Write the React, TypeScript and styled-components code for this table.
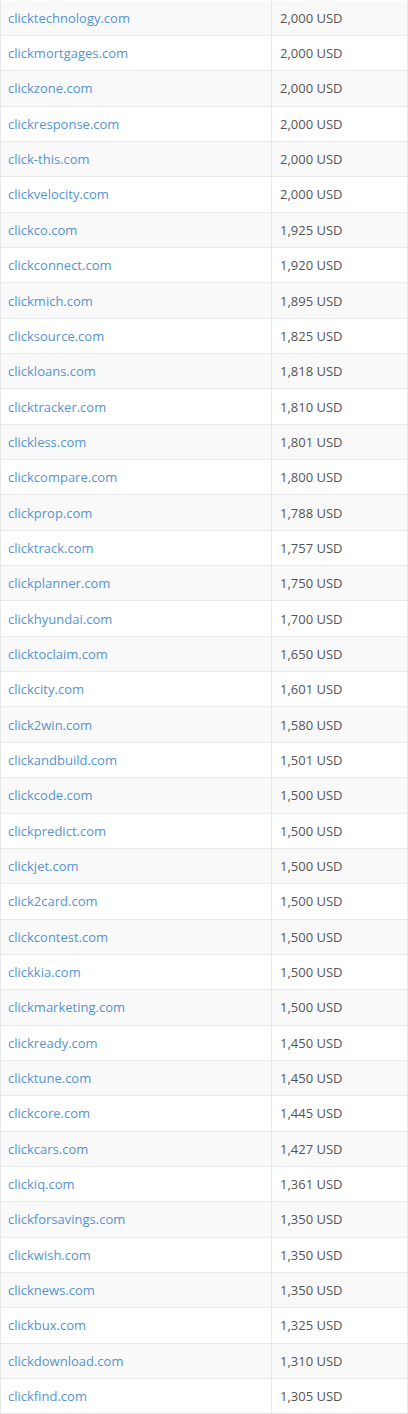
import React from "react";
import styled, { createGlobalStyle } from "styled-components";

const Global = createGlobalStyle`
  html, body { margin: 0; padding: 0; background: #fff; }
  body { font-family: "Open Sans", "Liberation Sans", sans-serif; }
`;

const rows: [string, string][] = [
  ["clicktechnology.com", "2,000"],
  ["clickmortgages.com", "2,000"],
  ["clickzone.com", "2,000"],
  ["clickresponse.com", "2,000"],
  ["click-this.com", "2,000"],
  ["clickvelocity.com", "2,000"],
  ["clickco.com", "1,925"],
  ["clickconnect.com", "1,920"],
  ["clickmich.com", "1,895"],
  ["clicksource.com", "1,825"],
  ["clickloans.com", "1,818"],
  ["clicktracker.com", "1,810"],
  ["clickless.com", "1,801"],
  ["clickcompare.com", "1,800"],
  ["clickprop.com", "1,788"],
  ["clicktrack.com", "1,757"],
  ["clickplanner.com", "1,750"],
  ["clickhyundai.com", "1,700"],
  ["clicktoclaim.com", "1,650"],
  ["clickcity.com", "1,601"],
  ["click2win.com", "1,580"],
  ["clickandbuild.com", "1,501"],
  ["clickcode.com", "1,500"],
  ["clickpredict.com", "1,500"],
  ["clickjet.com", "1,500"],
  ["click2card.com", "1,500"],
  ["clickcontest.com", "1,500"],
  ["clickkia.com", "1,500"],
  ["clickmarketing.com", "1,500"],
  ["clickready.com", "1,450"],
  ["clicktune.com", "1,450"],
  ["clickcore.com", "1,445"],
  ["clickcars.com", "1,427"],
  ["clickiq.com", "1,361"],
  ["clickforsavings.com", "1,350"],
  ["clickwish.com", "1,350"],
  ["clicknews.com", "1,350"],
  ["clickbux.com", "1,325"],
  ["clickdownload.com", "1,310"],
  ["clickfind.com", "1,305"],
];

const Table = styled.div`
  width: 408px;
  box-sizing: border-box;
  padding-top: 0.6px;
  border-left: 1px solid #e8e8e8;
  border-right: 1px solid #e8e8e8;
  display: flex;
  flex-direction: column;
`;

const Row = styled.div<{ $striped: boolean }>`
  display: grid;
  grid-template-columns: 270px 1fr;
  height: 35.35px;
  box-sizing: border-box;
  border-bottom: 1px solid #e8e8e8;
  background: ${(p) => (p.$striped ? "#f9f9f9" : "#fff")};
`;

const Cell = styled.div`
  display: flex;
  align-items: center;
  padding: 0 8px 0 7px;
  font-size: 13px;
  color: #555;
  white-space: nowrap;
  & + & {
    border-left: 1px solid #e8e8e8;
    padding-left: 8px;
  }
`;

const Link = styled.a`
  color: #5594d0;
  text-decoration: none;
`;

export default function App() {
  return (
    <>
      <Global />
      <Table>
        {rows.map(([d, v], i) => (
          <Row key={d} $striped={i % 2 === 0}>
            <Cell>
              <Link href="#">{d}</Link>
            </Cell>
            <Cell>{v} USD</Cell>
          </Row>
        ))}
      </Table>
    </>
  );
}
